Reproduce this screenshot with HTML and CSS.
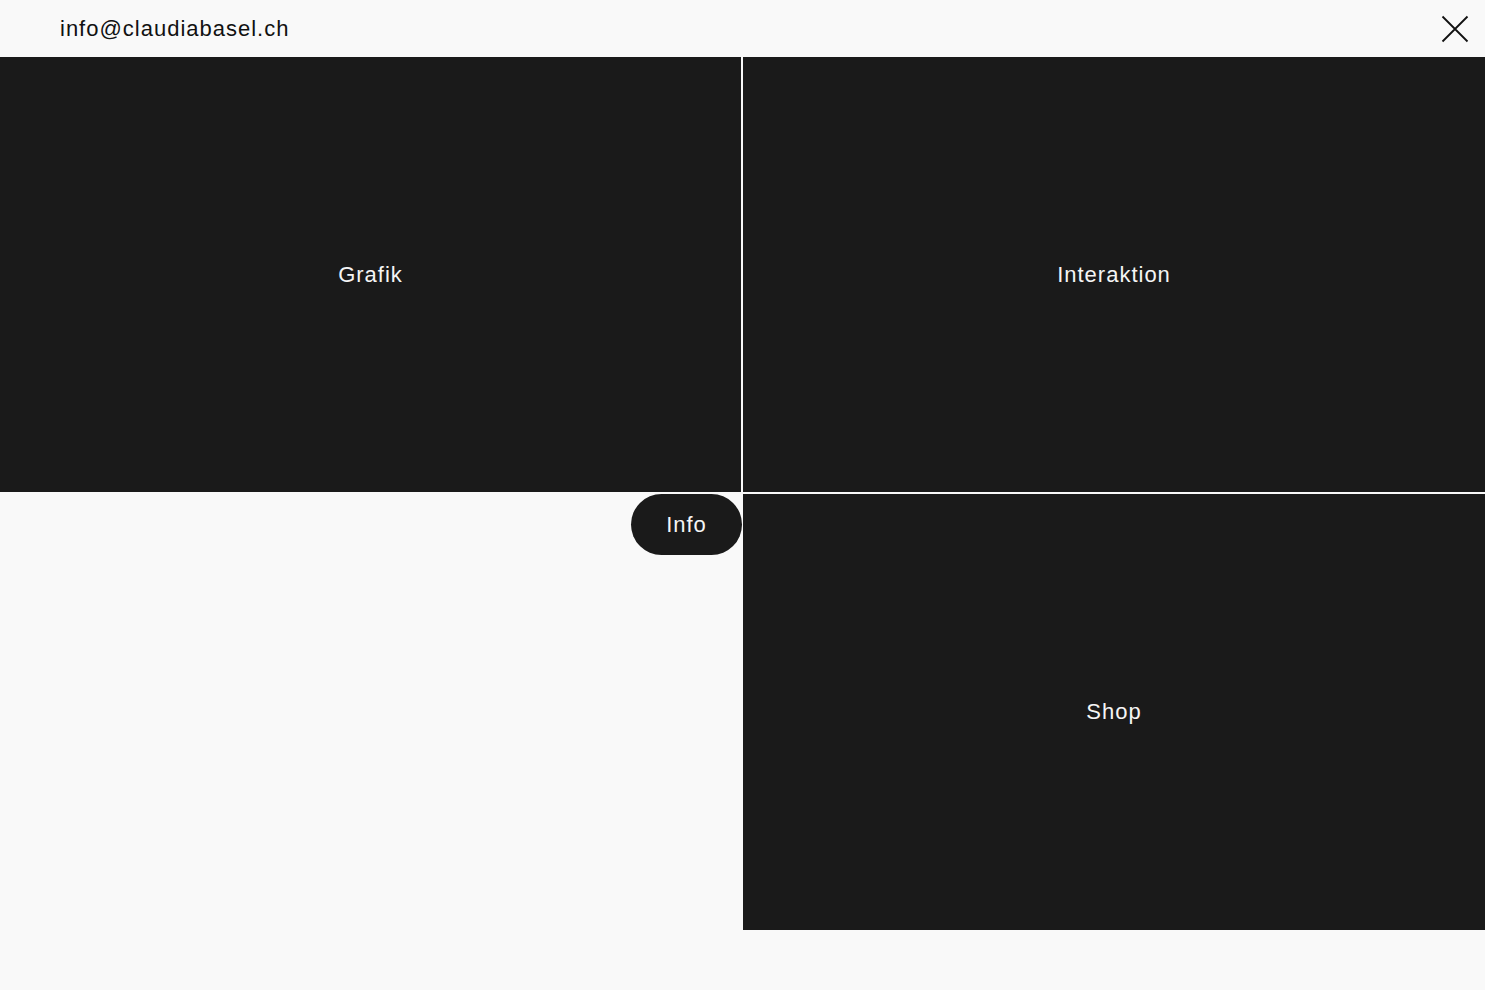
FILE: index.html
```html
<!DOCTYPE html>
<html lang="de">
<head>
<meta charset="utf-8">
<title>Claudia Basel</title>
<link rel="stylesheet" href="styles.css">
</head>
<body>
<header class="top">
  <a class="mail" href="#">info@claudiabasel.ch</a>
  <button class="close" aria-label="Schliessen">
    <svg width="28" height="28" viewBox="0 0 28 28"><path d="M1.5 1.5 L26.5 26.5 M26.5 1.5 L1.5 26.5" stroke="#111" stroke-width="1.8" fill="none"/></svg>
  </button>
</header>
<main class="grid">
  <a class="tile" href="#">Grafik</a>
  <a class="tile" href="#">Interaktion</a>
  <div class="cell">
    <a class="pill" href="#">Info</a>
  </div>
  <a class="tile" href="#">Shop</a>
</main>
</body>
</html>
```
FILE: styles.css
```css
html, body {
  margin: 0;
  padding: 0;
  background: #f9f9f9;
  font-family: "Liberation Sans", Arial, sans-serif;
  height: 990px;
  overflow: hidden;
}
.top {
  height: 57px;
  display: flex;
  align-items: center;
  justify-content: space-between;
  padding-left: 60px;
  padding-right: 16px;
  box-sizing: border-box;
}
.mail {
  color: #111;
  text-decoration: none;
  font-size: 22px;
  letter-spacing: 1px;
  margin-top: 1px;
}
.close {
  border: 0;
  background: none;
  padding: 0;
  width: 28px;
  height: 28px;
  display: block;
}
.close svg { display: block; }
.grid {
  display: grid;
  grid-template-columns: 741px 742px;
  grid-template-rows: 435px 436px;
  gap: 2px;
}
.tile {
  background: #1a1a1a;
  color: #f5f5f5;
  text-decoration: none;
  font-size: 22px;
  letter-spacing: 1px;
  display: flex;
  align-items: center;
  justify-content: center;
}
.cell {
  display: flex;
  justify-content: flex-end;
  align-items: flex-start;
}
.pill {
  width: 111px;
  height: 61px;
  margin-right: -1px;
  border-radius: 31px;
  background: #1a1a1a;
  color: #f5f5f5;
  text-decoration: none;
  font-size: 22px;
  letter-spacing: 1px;
  display: flex;
  align-items: center;
  justify-content: center;
}
```
